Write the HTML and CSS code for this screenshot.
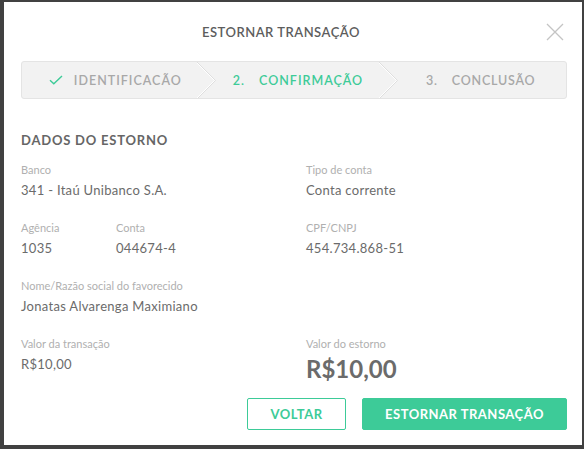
FILE: index.html
```html
<!DOCTYPE html>
<html lang="pt-BR">
<head>
<meta charset="utf-8">
<title>Estornar transação</title>
<link rel="stylesheet" href="styles.css">
</head>
<body>
<div class="backdrop">
  <div class="modal">
    <header class="modal-header">
      <h1 class="modal-title">ESTORNAR TRANSAÇÃO</h1>
      <button class="close" aria-label="Fechar">
        <svg width="18" height="18" viewBox="0 0 18 18"><path d="M1 1L17 17M17 1L1 17" stroke="#c4c4c4" stroke-width="1.3" fill="none"/></svg>
      </button>
    </header>

    <div class="stepper">
      <div class="step done">
        <svg class="check" width="14" height="10" viewBox="0 0 14 10"><path d="M1 5.2L4.8 8.8L13 1" stroke="#3dcb98" stroke-width="1.4" fill="none"/></svg>
        <span>IDENTIFICACÃO</span>
      </div>
      <svg class="chev" width="20" height="37" viewBox="0 0 20 37"><path d="M0 0L18.5 18.5L0 37" stroke="#dedede" stroke-width="1" fill="none"/><path d="M-1 0L17.5 18.5L-1 37" stroke="#ffffff" stroke-width="1" fill="none"/></svg>
      <div class="step active"><span class="num">2.</span><span>CONFIRMAÇÃO</span></div>
      <svg class="chev" width="20" height="37" viewBox="0 0 20 37"><path d="M0 0L18.5 18.5L0 37" stroke="#dedede" stroke-width="1" fill="none"/><path d="M-1 0L17.5 18.5L-1 37" stroke="#ffffff" stroke-width="1" fill="none"/></svg>
      <div class="step last"><span class="num">3.</span><span>CONCLUSÃO</span></div>
    </div>

    <h2 class="section-title">DADOS DO ESTORNO</h2>

    <div class="grid">
      <div class="field">
        <div class="label">Banco</div>
        <div class="value">341 - Itaú Unibanco S.A.</div>
      </div>
      <div class="field">
        <div class="label">Tipo de conta</div>
        <div class="value">Conta corrente</div>
      </div>
      <div class="row">
        <div class="field w95">
          <div class="label">Agência</div>
          <div class="value">1035</div>
        </div>
        <div class="field">
          <div class="label">Conta</div>
          <div class="value">044674-4</div>
        </div>
      </div>
      <div class="field">
        <div class="label">CPF/CNPJ</div>
        <div class="value">454.734.868-51</div>
      </div>
      <div class="field wide">
        <div class="label">Nome/Razão social do favorecido</div>
        <div class="value">Jonatas Alvarenga Maximiano</div>
      </div>
      <div class="field">
        <div class="label">Valor da transação</div>
        <div class="value">R$10,00</div>
      </div>
      <div class="field">
        <div class="label">Valor do estorno</div>
        <div class="value big">R$10,00</div>
      </div>
    </div>

    <footer class="actions">
      <button class="btn outline">VOLTAR</button>
      <button class="btn primary">ESTORNAR TRANSAÇÃO</button>
    </footer>
  </div>
</div>
</body>
</html>
```

FILE: styles.css
```css
* { box-sizing: border-box; }
html, body { margin: 0; padding: 0; }
body {
  background: #414141;
  font-family: Lato, "Open Sans", "Liberation Sans", sans-serif;
  width: 584px;
  height: 449px;
  overflow: hidden;
}
.backdrop {
  padding: 2px 2px 4px 4px;
}
.modal {
  width: 578px;
  height: 443px;
  background: #ffffff;
  padding: 0 15px 0 17px;
  display: flex;
  flex-direction: column;
}
.modal-header {
  height: 59px;
  display: flex;
  align-items: center;
  justify-content: center;
  position: relative;
  padding-right: 26px;
}
.modal-title {
  margin: 0;
  font-size: 13px;
  font-weight: 600;
  letter-spacing: 0.5px;
  color: #5d5d5d;
  padding-top: 1px;
}
.close {
  position: absolute;
  right: 3px;
  top: 21px;
  border: 0;
  background: none;
  padding: 0;
  width: 18px;
  height: 18px;
  display: flex;
}
.stepper {
  height: 38px;
  background: #f2f2f2;
  border: 1px solid #e4e4e4;
  border-radius: 3px;
  display: flex;
  align-items: stretch;
  overflow: hidden;
}
.step {
  flex: 1;
  display: flex;
  align-items: center;
  justify-content: center;
  gap: 12px;
  font-size: 12.5px;
  font-weight: 600;
  letter-spacing: 1px;
  color: #a8a8a8;
}
.step .num { margin-right: 2px; }
.step.active { color: #3dcb98; }
.step.done { gap: 11px; padding-left: 12px; }
.step.last { letter-spacing: 0.8px; padding-right: 4px; }
.chev { flex: none; display: block; }
.section-title {
  margin: 33px 0 0 0;
  font-size: 13px;
  font-weight: 700;
  letter-spacing: 0.8px;
  color: #666;
  line-height: 16px;
}
.grid {
  display: grid;
  grid-template-columns: 285px 1fr;
  row-gap: 22px;
  margin-top: 15px;
}
.wide { grid-column: 1 / 3; }
.row { display: flex; }
.w95 { width: 95px; }
.field { display: flex; flex-direction: column; }
.label {
  font-size: 11px;
  line-height: 14px;
  color: #b0b0b0;
}
.value {
  margin-top: 5px;
  font-size: 13px;
  line-height: 17px;
  color: #6b6b6b;
  letter-spacing: 0.3px;
}
.value.big {
  font-size: 24px;
  font-weight: 700;
  line-height: 26px;
  margin-top: 5px;
  letter-spacing: 0;
}
.actions {
  margin-top: 16px;
  display: flex;
  justify-content: flex-end;
  gap: 16px;
}
.btn {
  height: 32px;
  border-radius: 2px;
  font-family: inherit;
  font-size: 13px;
  font-weight: 700;
  letter-spacing: 0.5px;
  cursor: pointer;
}
.btn.outline {
  width: 99px;
  background: #fff;
  border: 1px solid #3dcb98;
  color: #3dcb98;
}
.btn.primary {
  width: 205px;
  background: #3dcb98;
  border: 1px solid #3dcb98;
  color: #fff;
}
```
